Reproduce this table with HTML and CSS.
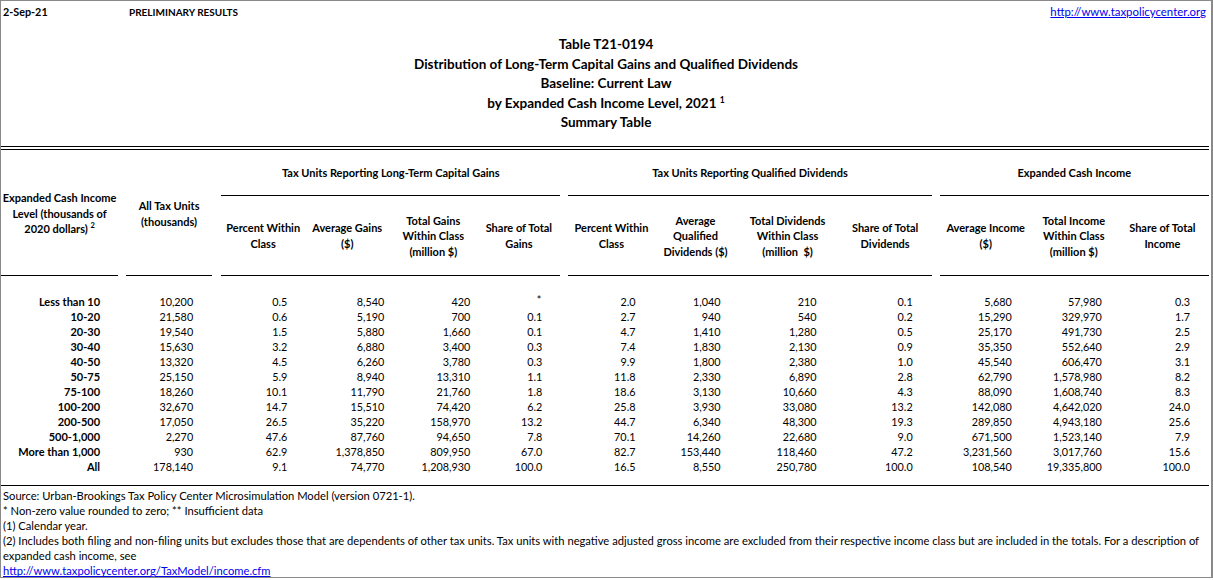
FILE: index.html
```html
<!DOCTYPE html>
<html lang="en">
<head>
<meta charset="utf-8">
<title>Table T21-0194</title>
<link rel="stylesheet" href="styles.css">
</head>
<body>
<div class="page">
  <div class="topbar">
    <span class="date">2-Sep-21</span>
    <span class="prelim">PRELIMINARY RESULTS</span>
    <a class="toplink" href="#">http://www.taxpolicycenter.org</a>
  </div>
  <div class="titles">
    <div>Table T21-0194</div>
    <div>Distribution of Long-Term Capital Gains and Qualified Dividends</div>
    <div>Baseline: Current Law</div>
    <div>by Expanded Cash Income Level, 2021 <sup>1</sup></div>
    <div>Summary Table</div>
  </div>
  <div class="double-rule"></div>
  <table class="data">
    <colgroup>
      <col class="w1"><col class="sp"><col class="w2"><col class="sp9">
      <col class="w3"><col class="w4"><col class="w5"><col class="w6"><col class="sp">
      <col class="w7"><col class="w8"><col class="w9"><col class="w10"><col class="sp">
      <col class="w11"><col class="w12"><col class="w13">
    </colgroup>
    <thead>
      <tr class="grp-row">
        <th rowspan="2" class="hd-span"><div class="hd-box">Expanded Cash Income<br>Level (thousands of<br>2020 dollars) <sup>2</sup></div></th>
        <th rowspan="2"></th>
        <th rowspan="2" class="hd-span"><div class="hd-box">All Tax Units<br>(thousands)</div></th>
        <th rowspan="2"></th>
        <th colspan="4" class="grp">Tax Units Reporting Long-Term Capital Gains</th>
        <th></th>
        <th colspan="4" class="grp">Tax Units Reporting Qualified Dividends</th>
        <th></th>
        <th colspan="3" class="grp">Expanded Cash Income</th>
      </tr>
      <tr class="col-row">
        <th>Percent Within<br>Class</th>
        <th>Average Gains<br>($)</th>
        <th>Total Gains<br>Within Class<br>(million $)</th>
        <th>Share of Total<br>Gains</th>
        <th class="nob"></th>
        <th>Percent Within<br>Class</th>
        <th>Average<br>Qualified<br>Dividends ($)</th>
        <th>Total Dividends<br>Within Class<br>(million &nbsp;$)</th>
        <th>Share of Total<br>Dividends</th>
        <th class="nob"></th>
        <th>Average Income<br>($)</th>
        <th>Total Income<br>Within Class<br>(million $)</th>
        <th>Share of Total<br>Income</th>
      </tr>
    </thead>
    <tbody>
      <tr class="gap-top"><td colspan="17"></td></tr>
      <tr><td>Less than 10</td><td></td><td>10,200</td><td></td><td>0.5</td><td>8,540</td><td>420</td><td class="star">*</td><td></td><td>2.0</td><td>1,040</td><td>210</td><td>0.1</td><td></td><td>5,680</td><td>57,980</td><td>0.3</td></tr>
      <tr><td>10-20</td><td></td><td>21,580</td><td></td><td>0.6</td><td>5,190</td><td>700</td><td>0.1</td><td></td><td>2.7</td><td>940</td><td>540</td><td>0.2</td><td></td><td>15,290</td><td>329,970</td><td>1.7</td></tr>
      <tr><td>20-30</td><td></td><td>19,540</td><td></td><td>1.5</td><td>5,880</td><td>1,660</td><td>0.1</td><td></td><td>4.7</td><td>1,410</td><td>1,280</td><td>0.5</td><td></td><td>25,170</td><td>491,730</td><td>2.5</td></tr>
      <tr><td>30-40</td><td></td><td>15,630</td><td></td><td>3.2</td><td>6,880</td><td>3,400</td><td>0.3</td><td></td><td>7.4</td><td>1,830</td><td>2,130</td><td>0.9</td><td></td><td>35,350</td><td>552,640</td><td>2.9</td></tr>
      <tr><td>40-50</td><td></td><td>13,320</td><td></td><td>4.5</td><td>6,260</td><td>3,780</td><td>0.3</td><td></td><td>9.9</td><td>1,800</td><td>2,380</td><td>1.0</td><td></td><td>45,540</td><td>606,470</td><td>3.1</td></tr>
      <tr><td>50-75</td><td></td><td>25,150</td><td></td><td>5.9</td><td>8,940</td><td>13,310</td><td>1.1</td><td></td><td>11.8</td><td>2,330</td><td>6,890</td><td>2.8</td><td></td><td>62,790</td><td>1,578,980</td><td>8.2</td></tr>
      <tr><td>75-100</td><td></td><td>18,260</td><td></td><td>10.1</td><td>11,790</td><td>21,760</td><td>1.8</td><td></td><td>18.6</td><td>3,130</td><td>10,660</td><td>4.3</td><td></td><td>88,090</td><td>1,608,740</td><td>8.3</td></tr>
      <tr><td>100-200</td><td></td><td>32,670</td><td></td><td>14.7</td><td>15,510</td><td>74,420</td><td>6.2</td><td></td><td>25.8</td><td>3,930</td><td>33,080</td><td>13.2</td><td></td><td>142,080</td><td>4,642,020</td><td>24.0</td></tr>
      <tr><td>200-500</td><td></td><td>17,050</td><td></td><td>26.5</td><td>35,220</td><td>158,970</td><td>13.2</td><td></td><td>44.7</td><td>6,340</td><td>48,300</td><td>19.3</td><td></td><td>289,850</td><td>4,943,180</td><td>25.6</td></tr>
      <tr><td>500-1,000</td><td></td><td>2,270</td><td></td><td>47.6</td><td>87,760</td><td>94,650</td><td>7.8</td><td></td><td>70.1</td><td>14,260</td><td>22,680</td><td>9.0</td><td></td><td>671,500</td><td>1,523,140</td><td>7.9</td></tr>
      <tr><td>More than 1,000</td><td></td><td>930</td><td></td><td>62.9</td><td>1,378,850</td><td>809,950</td><td>67.0</td><td></td><td>82.7</td><td>153,440</td><td>118,460</td><td>47.2</td><td></td><td>3,231,560</td><td>3,017,760</td><td>15.6</td></tr>
      <tr><td>All</td><td></td><td>178,140</td><td></td><td>9.1</td><td>74,770</td><td>1,208,930</td><td>100.0</td><td></td><td>16.5</td><td>8,550</td><td>250,780</td><td>100.0</td><td></td><td>108,540</td><td>19,335,800</td><td>100.0</td></tr>
      <tr class="gap-bottom"><td colspan="17"></td></tr>
    </tbody>
  </table>
  <div class="notes">
    <p>Source: Urban-Brookings Tax Policy Center Microsimulation Model (version 0721-1).</p>
    <p>* Non-zero value rounded to zero; ** Insufficient data</p>
    <p>(1) Calendar year.</p>
    <p class="nowrap">(2) Includes both filing and non-filing units but excludes those that are dependents of other tax units. Tax units with negative adjusted gross income are excluded from their respective income class but are included in the totals. For a description of</p>
    <p>expanded cash income, see</p>
    <p><a href="#">http://www.taxpolicycenter.org/TaxModel/income.cfm</a></p>
  </div>
</div>
</body>
</html>
```

FILE: styles.css
```css
* { box-sizing: border-box; }
html, body { margin: 0; padding: 0; background: #fff; }
body {
  font-family: Lato, "Liberation Sans", sans-serif;
  color: #000;
  font-size: 10.8px;
}
.page {
  width: 1213px;
  height: 578px;
  border: 1px solid #8a8a8a;
  border-right-width: 2px;
  overflow: hidden;
}
.topbar {
  display: flex;
  align-items: center;
  height: 22px;
  padding: 0 5px 0 2px;
  font-weight: bold;
  font-size: 10px;
  line-height: 22px;
}
.date { width: 126px; font-size: 10.8px; }
.prelim { flex: 1; }
.toplink {
  font-weight: normal;
  font-size: 11.4px;
  color: #0000ee;
  text-decoration: underline;
}
.titles {
  margin-top: 12px;
  text-align: center;
  font-weight: bold;
  font-size: 13.5px;
  line-height: 19.6px;
}
.titles sup { font-size: 8.5px; line-height: 0; vertical-align: 5px; }
.double-rule {
  margin-top: 13px;
  width: 1208px;
  height: 4px;
  border-top: 1px solid #000;
  border-bottom: 1px solid #000;
}
table.data {
  border-collapse: collapse;
  table-layout: fixed;
  width: 1208px;
}
col.sp { width: 8px; }
col.sp9 { width: 9px; }
col.w1 { width: 117px; }
col.w2 { width: 86px; }
col.w3 { width: 84px; }
col.w4 { width: 84px; }
col.w5 { width: 88px; }
col.w6 { width: 83px; }
col.w7 { width: 86px; }
col.w8 { width: 82px; }
col.w9 { width: 102px; }
col.w10 { width: 93px; }
col.w11 { width: 92px; }
col.w12 { width: 84px; }
col.w13 { width: 93px; }
th {
  font-weight: bold;
  font-size: 11px;
  line-height: 15.5px;
  text-align: center;
  padding: 0;
  white-space: nowrap;
}
th sup { font-size: 7.5px; line-height: 0; vertical-align: 5px; }
.grp-row th { height: 46px; }
.grp-row th.grp { border-bottom: 1px solid #000; }
.col-row th { height: 80px; border-bottom: 1px solid #000; }
.col-row th.nob { border-bottom: none; }
.hd-span { border-bottom: 1px solid #000; vertical-align: middle; }
.hd-box { padding-top: 2px; }
td {
  padding: 0;
  height: 15px;
  line-height: 15px;
  text-align: right;
  white-space: nowrap;
}
tbody td:nth-child(1) { font-weight: bold; font-size: 11px; padding-right: 18px; }
tbody td:nth-child(3) { padding-right: 19px; }
tbody td:nth-child(5) { padding-right: 18px; }
tbody td:nth-child(6) { padding-right: 5px; }
tbody td:nth-child(7) { padding-right: 7px; }
tbody td:nth-child(8) { padding-right: 18px; }
tbody td:nth-child(10) { padding-right: 19px; }
tbody td:nth-child(11) { padding-right: 16px; }
tbody td:nth-child(12) { padding-right: 22px; }
tbody td:nth-child(13) { padding-right: 19px; }
tbody td:nth-child(15) { padding-right: 20px; }
tbody td:nth-child(16) { padding-right: 14px; }
tbody td:nth-child(17) { padding-right: 19px; }
tbody td.star { padding-right: 19px; vertical-align: top; line-height: 12px; }
tr.gap-top td { height: 18px; }
tr.gap-bottom td { height: 12px; border-bottom: 1px solid #000; }
.notes {
  padding: 2px 0 0 2px;
  font-size: 11.2px;
  line-height: 15px;
}
.notes p { margin: 0; }
.notes .nowrap { white-space: nowrap; }
.notes a { color: #0000ee; text-decoration: underline; }
```
